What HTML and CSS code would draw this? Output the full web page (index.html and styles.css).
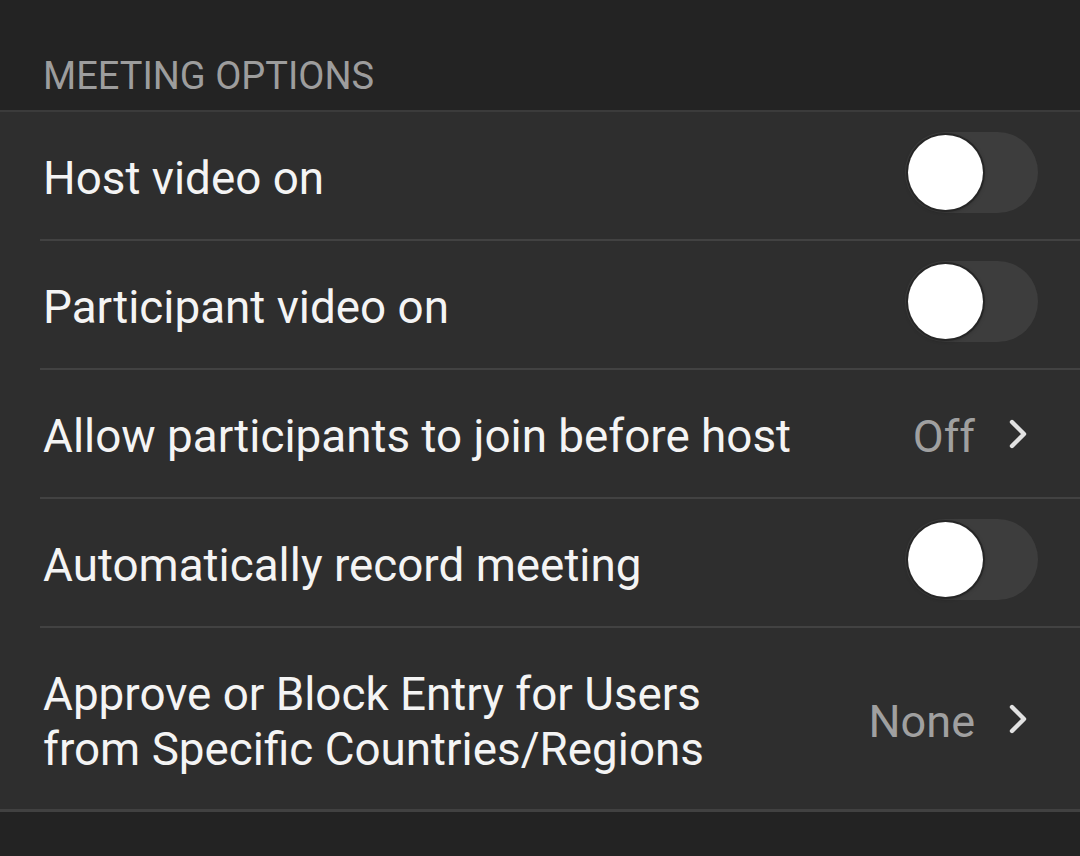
FILE: index.html
```html
<!DOCTYPE html>
<html lang="en">
<head>
<meta charset="utf-8">
<title>Meeting Options</title>
<link rel="stylesheet" href="styles.css">
</head>
<body>
<div class="screen">
  <div class="section-header">MEETING OPTIONS</div>
  <div class="list">
    <div class="row">
      <div class="row-inner">
        <div class="label">Host video on</div>
        <div class="toggle"><span class="knob"></span></div>
      </div>
    </div>
    <div class="row">
      <div class="row-inner">
        <div class="label">Participant video on</div>
        <div class="toggle"><span class="knob"></span></div>
      </div>
    </div>
    <div class="row">
      <div class="row-inner">
        <div class="label">Allow participants to join before host</div>
        <div class="value-wrap">
          <span class="value">Off</span>
          <svg class="chevron" viewBox="0 0 20 32" width="20" height="32"><path d="M4 4 L16 16 L4 28" fill="none" stroke="#e2e2e2" stroke-width="4.4" stroke-linecap="round" stroke-linejoin="round"/></svg>
        </div>
      </div>
    </div>
    <div class="row">
      <div class="row-inner">
        <div class="label">Automatically record meeting</div>
        <div class="toggle"><span class="knob"></span></div>
      </div>
    </div>
    <div class="row row-tall row-last">
      <div class="row-inner">
        <div class="label label-multi">Approve or Block Entry for Users<br>from Specific Countries/Regions</div>
        <div class="value-wrap">
          <span class="value">None</span>
          <svg class="chevron" viewBox="0 0 20 32" width="20" height="32"><path d="M4 4 L16 16 L4 28" fill="none" stroke="#e2e2e2" stroke-width="4.4" stroke-linecap="round" stroke-linejoin="round"/></svg>
        </div>
      </div>
    </div>
  </div>
</div>
</body>
</html>
```
FILE: styles.css
```css
html, body {
  margin: 0;
  padding: 0;
  background: #232323;
}
body {
  width: 1080px;
  height: 856px;
  overflow: hidden;
  font-family: Roboto, "Noto Sans", sans-serif;
}
.screen {
  display: flex;
  flex-direction: column;
}
.section-header {
  height: 112px;
  box-sizing: border-box;
  padding: 53px 0 0 43px;
  font-size: 38px;
  line-height: 46px;
  color: #9d9d9d;
  border-bottom: 2px solid #3b3b3b;
}
.list {
  background: #2e2e2e;
  border-bottom: 3px solid #414141;
}
.row {
  padding-left: 40px;
}
.row-inner {
  height: 127px;
  display: flex;
  align-items: center;
  justify-content: space-between;
  padding: 0 42px 0 3px;
  border-bottom: 2px solid #424242;
}
.row-tall .row-inner {
  height: 181px;
}
.row-last {
  padding-left: 0;
}
.row-last .row-inner {
  border-bottom: none;
  padding-left: 43px;
}
.label {
  font-size: 45.8px;
  color: #f4f4f4;
  padding-top: 6px;
  white-space: nowrap;
}
.label-multi {
  line-height: 55px;
}
.toggle {
  position: relative;
  width: 133px;
  height: 81px;
  border-radius: 41px;
  background: #3d3d3d;
  margin-bottom: 6px;
}
.knob {
  position: absolute;
  left: 3px;
  top: 3px;
  width: 75px;
  height: 75px;
  border-radius: 50%;
  background: #ffffff;
  box-shadow: 0 0 0 2px #262626, 0 1px 4px rgba(0,0,0,0.5);
}
.value-wrap {
  display: flex;
  align-items: center;
  margin-right: 10px;
}
.value {
  font-size: 45px;
  color: #a0a0a0;
  padding-top: 6px;
  margin-right: 33px;
}
.chevron {
  display: block;
}
```
